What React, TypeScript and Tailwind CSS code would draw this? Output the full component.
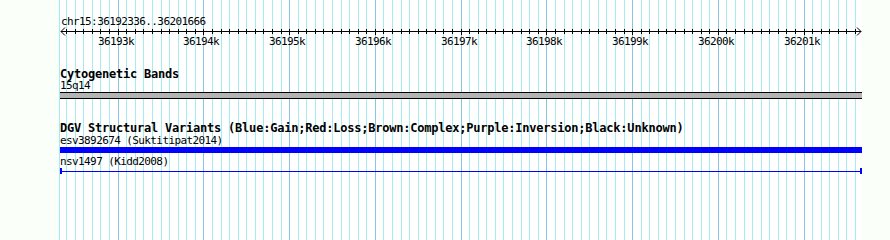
const START = 36192336;
const END = 36201666;
const toX = (bp: number) => Math.round(60.7 + ((bp - START) * 800) / (END - START));

const TICKS: number[] = [];
for (let bp = 36192400; bp <= 36201600; bp += 100) TICKS.push(bp);

const mono = "font-['DejaVu_Sans_Mono','Liberation_Mono',monospace]";

function Grid() {
  return (
    <svg className="absolute inset-0" width={890} height={240}>
      <rect x={59} y={0} width={803} height={240} fill="#ffffff" />
      <line x1={59.5} y1={0} x2={59.5} y2={240} stroke="#a4ecf0" />
      {TICKS.map((bp) => {
        const x = toX(bp) + 0.5;
        const major = bp % 1000 === 0;
        return (
          <line
            key={bp}
            x1={x}
            y1={0}
            x2={x}
            y2={240}
            stroke={major ? "#88c4e4" : "#a4ecf0"}
          />
        );
      })}
    </svg>
  );
}

function Ruler() {
  return (
    <svg width={890} height={20} className="-ml-[60px] block">
      <line x1={61} y1={4.5} x2={861} y2={4.5} stroke="#000" />
      <polyline points="65,0.5 61,4.5 65,8.5" fill="none" stroke="#000" />
      <polyline points="857,0.5 861,4.5 857,8.5" fill="none" stroke="#000" />
      {TICKS.map((bp) => {
        const x = toX(bp) + 0.5;
        const major = bp % 1000 === 0;
        return (
          <line key={bp} x1={x} y1={2} x2={x} y2={major ? 8 : 7} stroke="#000" />
        );
      })}
      {TICKS.filter((bp) => bp % 1000 === 0).map((bp) => (
        <text
          key={bp}
          x={toX(bp) - 2}
          y={18}
          textAnchor="middle"
          fontSize={11}
          letterSpacing={-0.6}
          fontFamily="'DejaVu Sans Mono', monospace"
          fill="#000"
        >
          {bp / 1000}k
        </text>
      ))}
    </svg>
  );
}

export default function App() {
  const small = `${mono} text-[11px] leading-[11px] h-[11px] tracking-[-0.6px] text-black whitespace-nowrap`;
  const title = `${mono} text-[12px] leading-[12px] h-[12px] font-bold tracking-[-0.22px] text-black whitespace-nowrap`;

  return (
    <div className="relative w-[890px] h-[240px] overflow-hidden bg-[#fafffa]">
      <Grid />
      <div className="relative flex flex-col pl-[60px] pt-[16px]">
        <div className={`${small} pl-px`}>chr15:36192336..36201666</div>
        <Ruler />

        <div className={`${title} mt-[21px]`}>Cytogenetic Bands</div>
        <div className={small}>15q14</div>
        <div className="mt-px h-[7px] w-[802px] border-y border-black bg-[#b4b4b4]" />

        <div className={`${title} mt-[23px]`}>
          DGV Structural Variants (Blue:Gain;Red:Loss;Brown:Complex;Purple:Inversion;Black:Unknown)
        </div>
        <div className={`${small} mt-px`}>esv3892674 (Suktitipat2014)</div>
        <div className="mt-px h-[6px] w-[802px] bg-[#0000ff]" />

        <div className={`${small} mt-[3px]`}>nsv1497 (Kidd2008)</div>
        <div className="mt-px flex h-[6px] w-[802px] items-center">
          <div className="h-full w-[2px] bg-[#0000ff]" />
          <div className="h-px flex-1 bg-[#0000ff]" />
          <div className="h-full w-[2px] bg-[#0000ff]" />
        </div>
      </div>
    </div>
  );
}
